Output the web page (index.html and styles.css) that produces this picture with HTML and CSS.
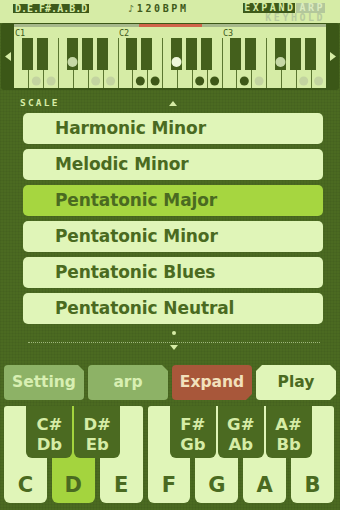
FILE: index.html
```html
<!DOCTYPE html>
<html>
<head>
<meta charset="utf-8">
<link rel="stylesheet" href="styles.css">
</head>
<body>
<div class="app">
  <header class="topbar">
    <span class="scale-code">D.E.F#.A.B.D</span>
    <span class="bpm">♪120BPM</span>
    <div class="modes">
      <div class="mode-row"><span class="tag tag-on">EXPAND</span><span class="tag tag-off">ARP</span></div>
      <span class="keyhold">KEYHOLD</span>
    </div>
  </header>

  <section class="mini-piano">
    <div class="side"><svg width="6" height="9" viewBox="0 0 6 9"><polygon points="6,0 0,4.5 6,9" fill="#d6eca6"/></svg></div>
    <div class="mp-main">
      <div class="progress"><div class="progress-fill" style="margin-left:125px;width:63px"></div></div>
      <div class="octave-labels"><span>C1</span><span>C2</span><span>C3</span></div>
      <svg class="mp-keys" width="312" height="50" viewBox="0 0 312 50">
        <path d="M14.5 0V50M29.5 0V50M44.5 0V50M59.5 0V50M74.5 0V50M89.5 0V50M104.5 0V50M118.5 0V50M133.5 0V50M148.5 0V50M163.5 0V50M178.5 0V50M193.5 0V50M208.5 0V50M222.5 0V50M237.5 0V50M252.5 0V50M267.5 0V50M282.5 0V50M297.5 0V50" stroke="#5b7630" stroke-width="1" fill="none"/>
        <g fill="#44601c">
          <rect x="8" y="0" width="11" height="32"/><rect x="23" y="0" width="11" height="32"/>
          <rect x="53" y="0" width="11" height="32"/><rect x="68" y="0" width="11" height="32"/><rect x="83" y="0" width="11" height="32"/>
          <rect x="112" y="0" width="11" height="32"/><rect x="127" y="0" width="11" height="32"/>
          <rect x="157" y="0" width="11" height="32"/><rect x="172" y="0" width="11" height="32"/><rect x="187" y="0" width="11" height="32"/>
          <rect x="216" y="0" width="11" height="32"/><rect x="231" y="0" width="11" height="32"/>
          <rect x="261" y="0" width="11" height="32"/><rect x="276" y="0" width="11" height="32"/><rect x="291" y="0" width="11" height="32"/>
        </g>
        <g fill="#c3d4a0">
          <circle cx="22.3" cy="43" r="4.5"/><circle cx="37.1" cy="43" r="4.5"/><circle cx="81.7" cy="43" r="4.5"/><circle cx="96.6" cy="43" r="4.5"/>
          <circle cx="245.1" cy="43" r="4.5"/><circle cx="289.7" cy="43" r="4.5"/><circle cx="304.6" cy="43" r="4.5"/>
        </g>
        <g fill="#3e5818">
          <circle cx="126.3" cy="43" r="4.5"/><circle cx="141.1" cy="43" r="4.5"/><circle cx="185.7" cy="43" r="4.5"/><circle cx="200.6" cy="43" r="4.5"/>
          <circle cx="230.3" cy="43" r="4.5"/>
        </g>
        <circle cx="58.5" cy="24" r="5" fill="#c6d8a6"/>
        <circle cx="162.5" cy="24" r="5" fill="#eef8da"/>
        <circle cx="266.5" cy="24" r="5" fill="#c6d8a6"/>
      </svg>
    </div>
    <div class="side"><svg width="6" height="9" viewBox="0 0 6 9"><polygon points="0,0 6,4.5 0,9" fill="#d6eca6"/></svg></div>
  </section>

  <section class="scale-panel">
    <div class="scale-head">
      <span class="scale-label">SCALE</span>
      <span class="arrow-up"></span>
      <span></span>
    </div>
    <ul class="scale-list">
      <li class="scale-item">Harmonic Minor</li>
      <li class="scale-item">Melodic Minor</li>
      <li class="scale-item selected">Pentatonic Major</li>
      <li class="scale-item">Pentatonic Minor</li>
      <li class="scale-item">Pentatonic Blues</li>
      <li class="scale-item">Pentatonic Neutral</li>
    </ul>
    <div class="list-foot">
      <span class="foot-dot"></span>
      <span class="foot-line"></span>
      <span class="arrow-down"></span>
    </div>
  </section>

  <nav class="buttons">
    <div class="btn btn-setting">Setting</div>
    <div class="btn btn-arp">arp</div>
    <div class="btn btn-expand">Expand</div>
    <div class="btn btn-play">Play</div>
  </nav>

  <div class="keyboard">
    <div class="white-keys">
      <div class="wk">C</div>
      <div class="wk active">D</div>
      <div class="wk">E</div>
      <div class="wk">F</div>
      <div class="wk">G</div>
      <div class="wk">A</div>
      <div class="wk">B</div>
    </div>
    <div class="bk bk-cs"><span>C#</span><span>Db</span></div>
    <div class="bk bk-ds"><span>D#</span><span>Eb</span></div>
    <div class="bk bk-fs"><span>F#</span><span>Gb</span></div>
    <div class="bk bk-gs"><span>G#</span><span>Ab</span></div>
    <div class="bk bk-as"><span>A#</span><span>Bb</span></div>
  </div>
</div>
</body>
</html>
```

FILE: styles.css
```css
html, body {
  margin: 0;
  padding: 0;
}
body {
  width: 340px;
  height: 510px;
  overflow: hidden;
  background-color: #4b6a21;
  background-image:
    linear-gradient(rgba(0,0,0,0.035) 1px, transparent 1px),
    linear-gradient(90deg, rgba(0,0,0,0.035) 1px, transparent 1px);
  background-size: 3px 3px;
  font-family: "DejaVu Sans", sans-serif;
}
.app {
  width: 340px;
  height: 510px;
  display: flex;
  flex-direction: column;
}

/* top bar */
.topbar {
  height: 23px;
  background: #d6eca6;
  display: flex;
  align-items: flex-start;
  flex-shrink: 0;
}
.scale-code {
  margin: 4px 0 0 13px;
  padding: 0 2px;
  height: 9px;
  line-height: 9px;
  font: bold 10px/9px "DejaVu Sans Mono", monospace;
  background: #3e5a1a;
  color: #d6eca6;
}
.bpm {
  margin: 4px 0 0 39px;
  font: bold 10px/9px "DejaVu Sans Mono", monospace;
  letter-spacing: 2.6px;
  color: #3e5a1a;
}
.modes {
  margin: 3px 15px 0 auto;
  display: flex;
  flex-direction: column;
  align-items: flex-end;
}
.mode-row {
  display: flex;
  gap: 1px;
}
.tag {
  font: bold 10px/10px "DejaVu Sans Mono", monospace;
  letter-spacing: 2.5px;
  height: 10px;
  padding: 0 0 0 1px;
}
.tag-on {
  background: #3e5a1a;
  color: #d6eca6;
}
.tag-off {
  background: #b3c79b;
  color: #dcecc0;
  padding: 0 0 0 3px;
}
.keyhold {
  margin-top: 0;
  font: bold 10px/10px "DejaVu Sans Mono", monospace;
  letter-spacing: 2.5px;
  color: #b6ca9e;
}

/* mini piano */
.mini-piano {
  margin: 0 1px;
  height: 67px;
  box-sizing: border-box;
  padding: 1px 0 2px;
  display: flex;
  background: #3b5717;
  border-radius: 3px;
  flex-shrink: 0;
}
.side {
  width: 13px;
  display: flex;
  align-items: center;
  justify-content: center;
}
.side svg { display: block; }
.mp-main {
  width: 312px;
  background: #d6eca6;
  display: flex;
  flex-direction: column;
}
.progress {
  height: 3px;
  background: #a6b88b;
  display: flex;
}
.progress-fill {
  height: 3px;
  background: #d0644a;
}
.octave-labels {
  height: 11px;
  box-sizing: border-box;
  padding-top: 1px;
  display: grid;
  grid-template-columns: repeat(3, 104px);
  font: 8.5px/10px "DejaVu Sans Mono", monospace;
  color: #3e5a1a;
}
.octave-labels span { padding-left: 1px; }
.mp-keys { display: block; }

/* scale list */
.scale-head {
  margin-top: 7px;
  height: 12px;
  padding: 0 17px 0 23px;
  display: grid;
  grid-template-columns: 1fr auto 1fr;
  align-items: center;
}
.scale-label {
  margin-left: -3px;
  font: bold 9.5px/12px "DejaVu Sans Mono", monospace;
  letter-spacing: 2.2px;
  color: #d6eca6;
}
.arrow-up {
  width: 0;
  height: 0;
  border-left: 4px solid transparent;
  border-right: 4px solid transparent;
  border-bottom: 5px solid #d6eca6;
}
.scale-list {
  list-style: none;
  margin: 4px 17px 0 23px;
  padding: 0;
  display: flex;
  flex-direction: column;
  gap: 5px;
}
.scale-item {
  height: 31px;
  border-radius: 5px;
  background: #e0f5b8;
  color: #4a6a21;
  font: bold 17px/31px "DejaVu Sans", sans-serif;
  letter-spacing: -0.1px;
  padding-left: 32px;
}
.scale-item.selected {
  background: #a6d640;
}
.list-foot {
  margin: 0 20px 0 28px;
  display: flex;
  flex-direction: column;
  align-items: center;
}
.foot-dot {
  margin-top: 7px;
  width: 4px;
  height: 4px;
  border-radius: 50%;
  background: #d6eca6;
}
.foot-line {
  margin-top: 7px;
  align-self: stretch;
  height: 0;
  border-top: 1px dotted #9fb87a;
}
.arrow-down {
  margin-top: 2px;
  width: 0;
  height: 0;
  border-left: 4px solid transparent;
  border-right: 4px solid transparent;
  border-top: 5px solid #d6eca6;
}

/* buttons */
.buttons {
  margin-top: 15px;
  padding-left: 4px;
  display: grid;
  grid-template-columns: repeat(4, 80px);
  gap: 4px;
  height: 35px;
}
.btn {
  display: flex;
  align-items: center;
  justify-content: center;
  font: bold 15.5px/1 "DejaVu Sans", sans-serif;
  border-radius: 4px;
}
.btn-setting, .btn-arp {
  background: #8db266;
  color: #d8efb2;
  clip-path: polygon(0 0, calc(100% - 6px) 0, 100% 6px, 100% 100%, 0 100%);
}
.btn-expand {
  background: #a8573a;
  color: #f2e0bc;
  clip-path: polygon(0 0, 100% 0, 100% calc(100% - 6px), calc(100% - 6px) 100%, 0 100%);
}
.btn-play {
  background: #e0f5b8;
  color: #4a6a21;
  clip-path: polygon(6px 0, calc(100% - 6px) 0, 100% 6px, 100% calc(100% - 6px), calc(100% - 6px) 100%, 0 100%, 0 6px);
}

/* keyboard */
.keyboard {
  position: relative;
  margin: 6px 6px 0 4px;
  height: 97px;
}
.white-keys {
  height: 97px;
  display: grid;
  grid-template-columns: repeat(7, 1fr);
  gap: 5px;
}
.wk {
  background: #e0f5b8;
  border-radius: 3px 3px 6px 6px;
  display: flex;
  align-items: flex-end;
  justify-content: center;
  padding-bottom: 7px;
  box-sizing: border-box;
  font: bold 21px/21px "DejaVu Sans", sans-serif;
  color: #4a6a21;
}
.wk.active {
  background: #a4d43e;
}
.bk {
  position: absolute;
  top: 0;
  width: 46px;
  height: 52px;
  box-sizing: border-box;
  padding-top: 9px;
  background: #4b6a21;
  border-radius: 0 0 6px 6px;
  display: flex;
  flex-direction: column;
  align-items: center;
  font: bold 16.5px/20px "DejaVu Sans", sans-serif;
  color: #d6eca6;
}
.bk-cs { left: 22.4px; }
.bk-ds { left: 70.2px; }
.bk-fs { left: 165.9px; }
.bk-gs { left: 213.8px; }
.bk-as { left: 261.6px; }
```
